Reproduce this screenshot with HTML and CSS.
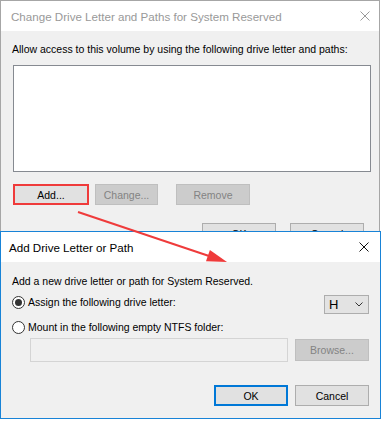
FILE: index.html
```html
<!DOCTYPE html>
<html lang="en">

<head>
    <meta charset="UTF-8">
    <meta name="viewport" content="width=device-width, initial-scale=1.0">
    <title>Change Drive Letter and Paths</title>
    <link rel="stylesheet" href="styles.css">
</head>

<body>
    <div class="screen">
        <div class="dialog back">
            <div class="titlebar">
                <span class="title">Change Drive Letter and Paths for System Reserved</span>
                <svg class="close" width="10" height="10" viewBox="0 0 10 10">
                    <path d="M0.5 0.5 L9.5 9.5 M9.5 0.5 L0.5 9.5" stroke="#9a9a9a" stroke-width="1" fill="none" />
                </svg>
            </div>
            <div class="body">
                <div class="label">Allow access to this volume by using the following drive letter and paths:</div>
                <div class="listbox"></div>
                <div class="btn-row">
                    <button class="btn add">Add...</button>
                    <button class="btn disabled change">Change...</button>
                    <button class="btn disabled remove">Remove</button>
                </div>
                <div class="btn-row end back-ok">
                    <button class="btn">OK</button>
                    <button class="btn">Cancel</button>
                </div>
            </div>
        </div>

        <div class="dialog front">
            <div class="titlebar">
                <span class="title">Add Drive Letter or Path</span>
                <svg class="close" width="10" height="10" viewBox="0 0 10 10">
                    <path d="M0.5 0.5 L9.5 9.5 M9.5 0.5 L0.5 9.5" stroke="#111" stroke-width="1" fill="none" />
                </svg>
            </div>
            <div class="body">
                <div class="label">Add a new drive letter or path for System Reserved.</div>
                <div class="option-row">
                    <label class="radio-label"><span class="radio checked"></span>Assign the following drive letter:</label>
                    <div class="dropdown">
                        <span class="letter">H</span>
                        <svg width="8" height="5" viewBox="0 0 8 5">
                            <path d="M0.5 0.5 L4 4 L7.5 0.5" stroke="#333" stroke-width="1" fill="none" />
                        </svg>
                    </div>
                </div>
                <div class="option-row second">
                    <label class="radio-label"><span class="radio"></span>Mount in the following empty NTFS folder:</label>
                </div>
                <div class="folder-row">
                    <div class="folder-field"></div>
                    <button class="btn disabled browse">Browse...</button>
                </div>
                <div class="btn-row end front-ok">
                    <button class="btn default">OK</button>
                    <button class="btn">Cancel</button>
                </div>
            </div>
        </div>

        <svg class="arrow" width="381" height="422" viewBox="0 0 381 422">
            <line x1="78" y1="212" x2="212" y2="257" stroke="#ef3b3b" stroke-width="2" />
            <polygon points="227,262 206,261.3 209.9,249.9" fill="#ef3b3b" />
        </svg>
    </div>
</body>

</html>
```

FILE: styles.css
```css
body {
    margin: 0;
    background: #fff;
    font-family: "Liberation Sans", Arial, sans-serif;
    font-size: 10.5px;
    color: #000;
}

.screen {
    position: relative;
    width: 381px;
    height: 422px;
    overflow: hidden;
}

.dialog {
    box-sizing: border-box;
    background: #f0f0f0;
}

.back {
    width: 380px;
    height: 231px;
    border: 1px solid #a6a6a6;
    border-bottom: none;
    overflow: hidden;
}

.front {
    width: 381px;
    border: 1px solid #1883d7;
}

.titlebar {
    display: flex;
    align-items: center;
    justify-content: space-between;
    height: 30px;
    background: #fff;
    font-size: 11.6px;
}

.back .titlebar {
    padding: 0 9px 0 10px;
    color: #999;
}

.front .titlebar {
    padding: 0 11px 0 8px;
}

.close {
    display: block;
}

.body {
    padding: 0 11px;
}

.label {
    line-height: 16px;
    white-space: nowrap;
}

.back .body {
    padding-top: 10px;
}

.front .body {
    padding-top: 11px;
    padding-bottom: 12px;
}

.listbox {
    width: 358px;
    height: 107px;
    box-sizing: border-box;
    margin: 8px 0 0 1px;
    background: #fff;
    border: 1px solid #868a91;
}

.btn-row {
    display: flex;
    margin-top: 12px;
}

.btn-row.end {
    justify-content: flex-end;
}

.btn {
    box-sizing: border-box;
    height: 21px;
    width: 74px;
    padding: 0;
    margin: 0;
    font-family: inherit;
    font-size: 10.5px;
    color: #000;
    background: #e1e1e1;
    border: 1px solid #adadad;
}

.btn.disabled {
    background: #cccccc;
    border-color: #bfbfbf;
    color: #838383;
}

.btn.add {
    width: 76px;
    margin-left: 1px;
    border: 2px solid #ef3b3b;
}

.btn.change {
    width: 63px;
    margin-left: 6px;
}

.btn.remove {
    margin-left: 18px;
}

.back-ok {
    margin-top: 18px;
    gap: 14px;
    padding-right: 4px;
}

.btn.default {
    border: 2px solid #0078d7;
}

.option-row {
    display: flex;
    align-items: flex-start;
    justify-content: space-between;
    height: 20px;
    margin-top: 5px;
}

.option-row.second {
    height: 16px;
}

.radio-label {
    display: flex;
    align-items: center;
    height: 16px;
    line-height: 16px;
    white-space: nowrap;
}

.radio {
    display: flex;
    align-items: center;
    justify-content: center;
    box-sizing: border-box;
    width: 13px;
    height: 13px;
    margin-right: 3px;
    border: 1px solid #333;
    border-radius: 50%;
    background: #fff;
}

.radio.checked::after {
    content: "";
    width: 7px;
    height: 7px;
    border-radius: 50%;
    background: #333;
}

.dropdown {
    display: flex;
    align-items: center;
    justify-content: space-between;
    box-sizing: border-box;
    width: 45px;
    height: 19px;
    margin-top: 1px;
    padding: 0 5px 0 4px;
    background: #e3e3e3;
    border: 1px solid #adadad;
}

.dropdown .letter {
    font-size: 13px;
}

.folder-row {
    display: flex;
    align-items: flex-start;
    margin-top: 3px;
}

.folder-field {
    box-sizing: border-box;
    width: 258px;
    height: 24px;
    margin-left: 18px;
    background: #f0f0f0;
    border: 1px solid #d4d4d4;
}

.btn.browse {
    height: 22px;
    margin: 1px 0 0 7px;
}

.front-ok {
    margin-top: 23px;
    gap: 7px;
}

.arrow {
    position: absolute;
    left: 0;
    top: 0;
    pointer-events: none;
}
```
